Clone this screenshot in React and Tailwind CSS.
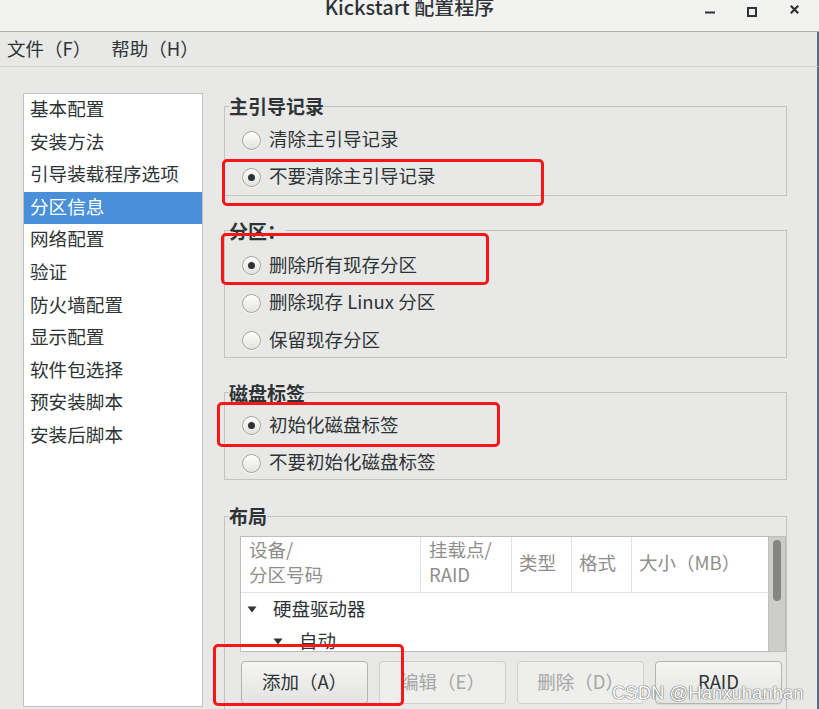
import React from "react";

function Radio({ checked, label }) {
  return (
    <div className="flex items-center h-[32px] pl-[17px] gap-[8px]">
      <span className="w-[19px] h-[19px] rounded-full border border-[#a4a4a2] bg-linear-to-b from-[#ffffff] to-[#e2e2e0] flex items-center justify-center shadow-[0_1px_0_rgba(255,255,255,0.8)]">
        {checked && <span className="w-[7px] h-[7px] rounded-full bg-[#2e3436]" />}
      </span>
      <span className="leading-[28px] pb-[4px]">{label}</span>
    </div>
  );
}

function Frame({ title, className = "", children }) {
  return (
    <fieldset className={"border border-[#c3c3c1] min-w-0 " + className}>
      <legend className="ml-[4px] px-0 text-[19px] leading-[20px] h-[20px] font-bold text-[#2e3436]">{title}</legend>
      {children}
    </fieldset>
  );
}

function Tri() {
  return (
    <svg width="10" height="7" viewBox="0 0 10 7" className="shrink-0">
      <polygon points="0.5,0.5 9.5,0.5 5,6.5" fill="#2e3436" />
    </svg>
  );
}

const listItems = [
  "基本配置",
  "安装方法",
  "引导装载程序选项",
  "分区信息",
  "网络配置",
  "验证",
  "防火墙配置",
  "显示配置",
  "软件包选择",
  "预安装脚本",
  "安装后脚本",
];

export default function App() {
  return (
    <div className="relative w-[819px] h-[709px] overflow-hidden bg-[#e8e8e7] text-[#2e3436] font-['Noto_Sans_CJK_SC','Noto_Sans',sans-serif]">
      {/* Title bar */}
      <div className="h-[32px] bg-[#f2f2f1] border-b border-[#b0b0ae] grid grid-cols-[1fr_auto_1fr] items-start">
        <div />
        <div className="text-[20px] leading-[20px] mt-[-3px] font-medium whitespace-nowrap">Kickstart 配置程序</div>
        <div className="flex justify-end items-start pr-[20px]">
          <svg width="10" height="20" viewBox="0 0 10 20">
            <rect x="0" y="11.5" width="10" height="2" fill="#2e3436" />
          </svg>
          <svg width="10" height="20" viewBox="0 0 10 20" className="ml-[32px]">
            <rect x="1" y="8" width="8" height="8" fill="none" stroke="#2e3436" strokeWidth="2" />
          </svg>
          <svg width="9" height="20" viewBox="0 0 9 20" className="ml-[33px]">
            <path d="M0.8 5.8 L8.2 13.2 M8.2 5.8 L0.8 13.2" stroke="#2e3436" strokeWidth="2.2" />
          </svg>
        </div>
      </div>

      {/* Menu bar */}
      <div className="h-[35px] border-b border-[#d3d3d1] border-r-2 border-r-[#4f7080] flex items-center pl-[7px] gap-[20px] text-[18.5px]">
        <span>文件（F）</span>
        <span>帮助（H）</span>
      </div>

      {/* Main */}
      <div className="flex items-start h-[642px] border-r-2 border-[#4f7080]">
        {/* Left list */}
        <div className="ml-[23px] mt-[26px] w-[180px] h-[614px] bg-white border border-[#c2c2c0] shrink-0 text-[18.6px]">
          {listItems.map((t, i) => (
            <div
              key={t}
              className={
                "h-[32.6px] leading-[28.6px] pl-[6px] whitespace-nowrap " +
                (i === 3 ? "bg-[#4a90d9] text-white" : "")
              }
            >
              {t}
            </div>
          ))}
        </div>

        {/* Right panel */}
        <div className="ml-[21px] mt-[29px] w-[563px] shrink-0 flex flex-col text-[18.5px]">
          <Frame title="主引导记录">
            <div className="pt-[8px] pb-[1.5px] flex flex-col gap-[5px]">
              <Radio label="清除主引导记录" />
              <Radio checked label="不要清除主引导记录" />
            </div>
          </Frame>

          <Frame title="分区：" className="mt-[25px]">
            <div className="pt-[9px] flex flex-col gap-[5.5px]">
              <Radio checked label="删除所有现存分区" />
              <Radio label="删除现存 Linux 分区" />
              <Radio label="保留现存分区" />
            </div>
          </Frame>

          <Frame title="磁盘标签" className="mt-[25px]">
            <div className="pt-[7px] flex flex-col gap-[5.5px]">
              <Radio checked label="初始化磁盘标签" />
              <Radio label="不要初始化磁盘标签" />
            </div>
          </Frame>

          <Frame title="布局" className="mt-[26px] pb-[20px]">
            <div className="pt-[10px] pl-[15px]">
              <div className="h-[116px] border border-[#bdbdbb] flex bg-white">
                <div className="flex-1 min-w-0 overflow-hidden">
                  <div className="grid grid-cols-[180px_91px_60px_60px_1fr] h-[56px] border-b border-[#e4e4e2] text-[#8e8e8c] leading-[25px]">
                    <div className="pl-[8px] border-r border-[#e2e2e0]">
                      <div>设备/</div>
                      <div>分区号码</div>
                    </div>
                    <div className="pl-[8px] border-r border-[#e2e2e0] whitespace-nowrap">
                      <div>挂载点/</div>
                      <div>RAID</div>
                    </div>
                    <div className="pl-[7px] border-r border-[#e2e2e0] flex items-center pb-[5px]">类型</div>
                    <div className="pl-[7px] border-r border-[#e2e2e0] flex items-center pb-[5px]">格式</div>
                    <div className="pl-[7px] flex items-center pb-[5px] whitespace-nowrap">大小（MB）</div>
                  </div>
                  <div className="h-[32px] flex items-center pl-[6px] gap-[16px]">
                    <Tri />
                    <span className="leading-[28px] pb-[3px]">硬盘驱动器</span>
                  </div>
                  <div className="h-[32px] flex items-center pl-[32px] gap-[16px]">
                    <Tri />
                    <span className="leading-[28px] pb-[2px]">自动</span>
                  </div>
                </div>
                <div className="w-[17px] shrink-0 bg-[#cdcdcb] border-l border-[#c0c0be] pt-[3px] flex justify-center">
                  <div className="w-[8px] h-[61px] rounded-full bg-[#858583]" />
                </div>
              </div>

              <div className="mt-[9px] ml-[1px] w-[541px] flex gap-[11px]">
                <div className="flex-1 h-[43px] rounded-[4px] border border-[#b4b4b2] bg-linear-to-b from-[#f5f5f4] to-[#e3e3e1] shadow-[0_1px_1px_rgba(0,0,0,0.08)] flex items-center justify-center pb-[2px]">
                  添加（A）
                </div>
                <div className="flex-1 h-[43px] rounded-[4px] border border-[#cfcfcd] bg-[#eeeeec] text-[#a6a6a4] flex items-center justify-center pb-[2px]">
                  编辑（E）
                </div>
                <div className="flex-1 h-[43px] rounded-[4px] border border-[#cfcfcd] bg-[#eeeeec] text-[#a6a6a4] flex items-center justify-center pb-[2px]">
                  删除（D）
                </div>
                <div className="flex-1 h-[43px] rounded-[4px] border border-[#b4b4b2] bg-linear-to-b from-[#f5f5f4] to-[#e3e3e1] shadow-[0_1px_1px_rgba(0,0,0,0.08)] flex items-center justify-center pb-[2px]">
                  RAID
                </div>
              </div>
            </div>
          </Frame>
        </div>
      </div>

      {/* Annotation overlays */}
      <div className="absolute left-[222px] top-[159px] w-[322px] h-[47px] border-[3px] border-[#f81616] rounded-[5px] pointer-events-none" />
      <div className="absolute left-[221px] top-[233px] w-[268px] h-[52px] border-[3px] border-[#f81616] rounded-[5px] pointer-events-none" />
      <div className="absolute left-[217px] top-[402px] w-[283px] h-[45px] border-[3px] border-[#f81616] rounded-[5px] pointer-events-none" />
      <div className="absolute left-[213px] top-[644px] w-[191px] h-[62px] border-[3px] border-[#f81616] rounded-[5px] pointer-events-none" />

      {/* Watermark */}
      <div className="absolute left-[612px] top-[683px] text-[18.5px] leading-[20px] font-['Liberation_Sans',sans-serif] text-white whitespace-nowrap [text-shadow:0_0_1px_#6a6a6a,0_0_1px_#6a6a6a,0_0_1px_#6a6a6a]">
        CSDN @Hanxuhanhan
      </div>
    </div>
  );
}
